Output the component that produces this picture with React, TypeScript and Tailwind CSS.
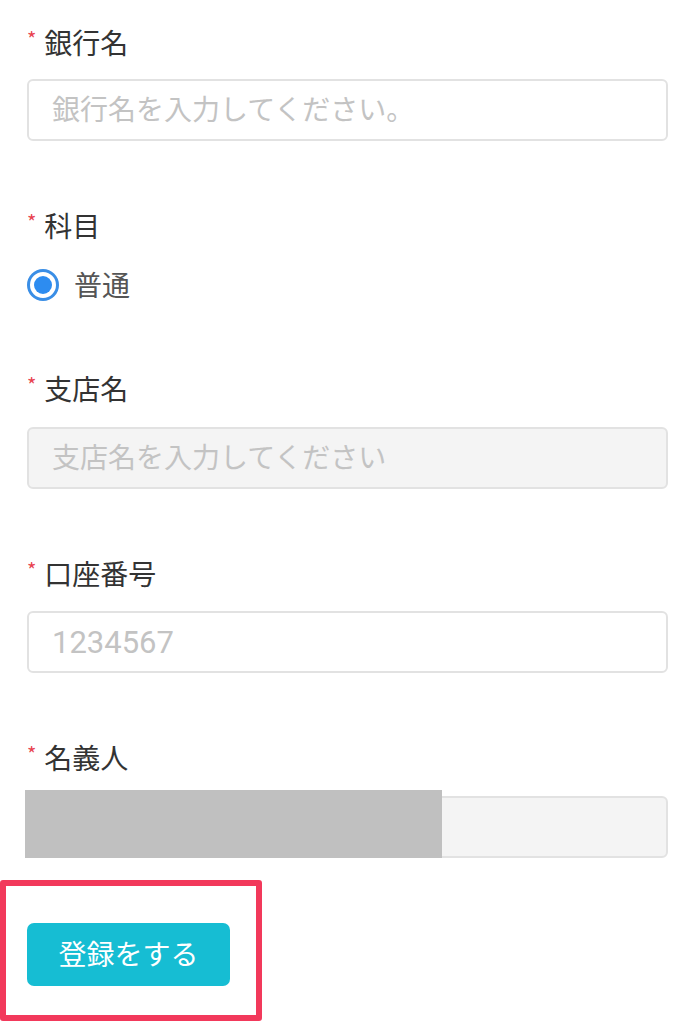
import React from "react";

const font = { fontFamily: '"Noto Sans CJK JP", "Noto Sans", sans-serif' };
const inputFont = { fontFamily: 'Roboto, "Noto Sans CJK JP", sans-serif' };

function Label({ children }: { children: React.ReactNode }) {
  return (
    <div className="flex h-[36px] items-center text-[28px] leading-none text-[#333333]">
      <span className="mr-[8px] -translate-y-[3px] text-[20px] text-[#e8434f]">*</span>
      <span>{children}</span>
    </div>
  );
}

function TextInput({
  placeholder,
  disabled,
  size = "text-[28px]",
}: {
  placeholder?: string;
  disabled?: boolean;
  size?: string;
}) {
  return (
    <input
      disabled={disabled}
      placeholder={placeholder}
      className={
        "h-[62px] w-full rounded-[6px] border-2 border-[#e2e2e2] px-[23px] outline-none placeholder:text-[#c3c3c3] " +
        size +
        " " +
        (disabled ? "bg-[#f4f4f4]" : "bg-white")
      }
      style={inputFont}
    />
  );
}

export default function App() {
  return (
    <div className="min-h-[1024px] w-[691px] bg-white" style={font}>
      <div className="flex flex-col px-[27px] pt-[24px] pr-[23px]">
        {/* 銀行名 */}
        <Label>銀行名</Label>
        <div className="mt-[19px]">
          <TextInput placeholder="銀行名を入力してください。" />
        </div>

        {/* 科目 */}
        <div className="mt-[66px]">
          <Label>科目</Label>
        </div>
        <div className="mt-[24px] mb-[2px] flex h-[36px] items-center gap-[15px]">
          <span className="flex h-[32px] w-[32px] items-center justify-center rounded-full border-[3px] border-[#3a8ee6] bg-white">
            <span className="h-[18px] w-[18px] rounded-full bg-[#2d8cf0]" />
          </span>
          <span className="-translate-y-[1px] text-[28px] leading-none text-[#555555]">普通</span>
        </div>

        {/* 支店名 */}
        <div className="mt-[65px]">
          <Label>支店名</Label>
        </div>
        <div className="mt-[21px]">
          <TextInput disabled placeholder="支店名を入力してください" />
        </div>

        {/* 口座番号 */}
        <div className="mt-[66px]">
          <Label>口座番号</Label>
        </div>
        <div className="mt-[20px]">
          <TextInput placeholder="1234567" size="text-[31px]" />
        </div>

        {/* 名義人 */}
        <div className="mt-[66px]">
          <Label>名義人</Label>
        </div>
        <div className="relative mt-[21px]">
          <TextInput disabled />
          <div className="absolute -left-[2px] -top-[6px] h-[68px] w-[417px] bg-[#c0c0c0]" />
        </div>
      </div>

      {/* submit */}
      <div className="mt-[22px] h-[141px] w-[262px] rounded-[3px] border-[6px] border-[#f2395b] px-[21px] pt-[37px]">
        <button
          className="h-[63px] w-[203px] rounded-[7px] bg-[#16bdd3] pb-[4px] text-[28px] text-white"
          style={font}
        >
          登録をする
        </button>
      </div>
    </div>
  );
}
